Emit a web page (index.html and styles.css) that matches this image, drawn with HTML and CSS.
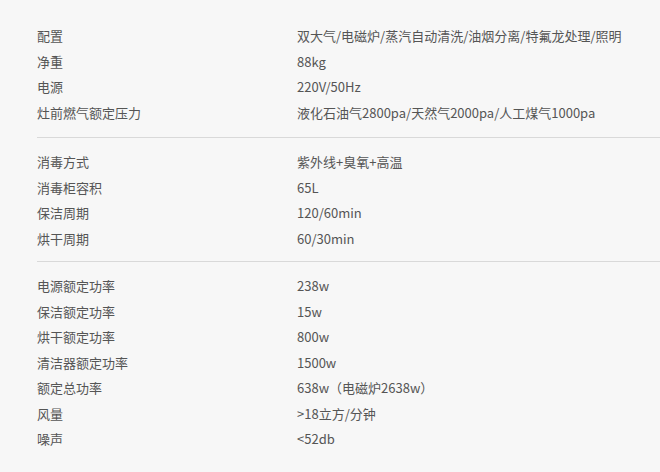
FILE: index.html
```html
<!DOCTYPE html>
<html lang="zh-CN">
<head>
<meta charset="utf-8">
<link rel="stylesheet" href="styles.css">
</head>
<body>
<div class="specs">
  <div class="group first">
    <div class="row"><span class="label">配置</span><span class="value">双大气/电磁炉/蒸汽自动清洗/油烟分离/特氟龙处理/照明</span></div>
    <div class="row"><span class="label">净重</span><span class="value">88kg</span></div>
    <div class="row"><span class="label">电源</span><span class="value">220V/50Hz</span></div>
    <div class="row"><span class="label">灶前燃气额定压力</span><span class="value">液化石油气2800pa/天然气2000pa/人工煤气1000pa</span></div>
  </div>
  <div class="group">
    <div class="row"><span class="label">消毒方式</span><span class="value">紫外线+臭氧+高温</span></div>
    <div class="row"><span class="label">消毒柜容积</span><span class="value">65L</span></div>
    <div class="row"><span class="label">保洁周期</span><span class="value">120/60min</span></div>
    <div class="row"><span class="label">烘干周期</span><span class="value">60/30min</span></div>
  </div>
  <div class="group last">
    <div class="row"><span class="label">电源额定功率</span><span class="value">238w</span></div>
    <div class="row"><span class="label">保洁额定功率</span><span class="value">15w</span></div>
    <div class="row"><span class="label">烘干额定功率</span><span class="value">800w</span></div>
    <div class="row"><span class="label">清洁器额定功率</span><span class="value">1500w</span></div>
    <div class="row"><span class="label">额定总功率</span><span class="value">638w（电磁炉2638w）</span></div>
    <div class="row"><span class="label">风量</span><span class="value">&gt;18立方/分钟</span></div>
    <div class="row"><span class="label">噪声</span><span class="value">&lt;52db</span></div>
  </div>
</div>
</body>
</html>
```
FILE: styles.css
```css
html, body {
  margin: 0;
  padding: 0;
  background: #f7f7f7;
}
body {
  font-family: "Noto Sans CJK SC", "Open Sans", sans-serif;
  font-size: 13px;
  color: #555;
}
.specs {
  padding: 23px 0 0 37px;
}
.group {
  padding: 11px 0 10px;
  border-bottom: 1px solid #d9d9d9;
}
.group.first {
  padding-top: 0;
  padding-bottom: 12px;
}
.group.last {
  border-bottom: none;
}
.row {
  display: grid;
  grid-template-columns: 260px 1fr;
  height: 25.5px;
  line-height: 25.5px;
  white-space: nowrap;
}
```
